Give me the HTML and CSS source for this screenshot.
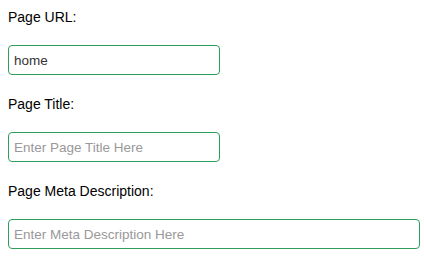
FILE: index.html
```html
<!doctype html>
<html lang="en">
    <head>
        <meta charset="utf8">
        <link rel="stylesheet" href="styles.css">
    </head>
    <body>
        <form class="page-form">
            <div class="field">
                <label for="pageUrl">Page URL:</label>
                <input id="pageUrl" class="short" type="text" value="home">
            </div>
            <div class="field">
                <label for="pageTitle">Page Title:</label>
                <input id="pageTitle" class="short" type="text" placeholder="Enter Page Title Here">
            </div>
            <div class="field">
                <label for="pageMeta">Page Meta Description:</label>
                <input id="pageMeta" class="long" type="text" placeholder="Enter Meta Description Here">
            </div>
        </form>
    </body>
</html>
```

FILE: styles.css
```css
body {
    background-color: #fff;
    color: #000;
    font-family: "Liberation Sans", Arial, sans-serif;
    font-size: 14px;
    margin: 8px 4px 0 8px;
}
.page-form {
    margin: 0;
}
.field {
    display: flex;
    flex-direction: column;
    align-items: flex-start;
    margin-bottom: 20px;
}
.field:last-child {
    margin-bottom: 0;
}
.field label {
    display: block;
    line-height: 18px;
    margin: 0 0 19px;
}
.field input {
    border: 1px solid #2e9e5c;
    border-radius: 4px;
    box-sizing: border-box;
    color: #333;
    font-family: inherit;
    font-size: 13.5px;
    height: 30px;
    margin: 0;
    outline: none;
    padding: 0 5px;
}
.field input::placeholder {
    color: #999;
}
.short {
    width: 212px;
}
.long {
    align-self: stretch;
}
```
